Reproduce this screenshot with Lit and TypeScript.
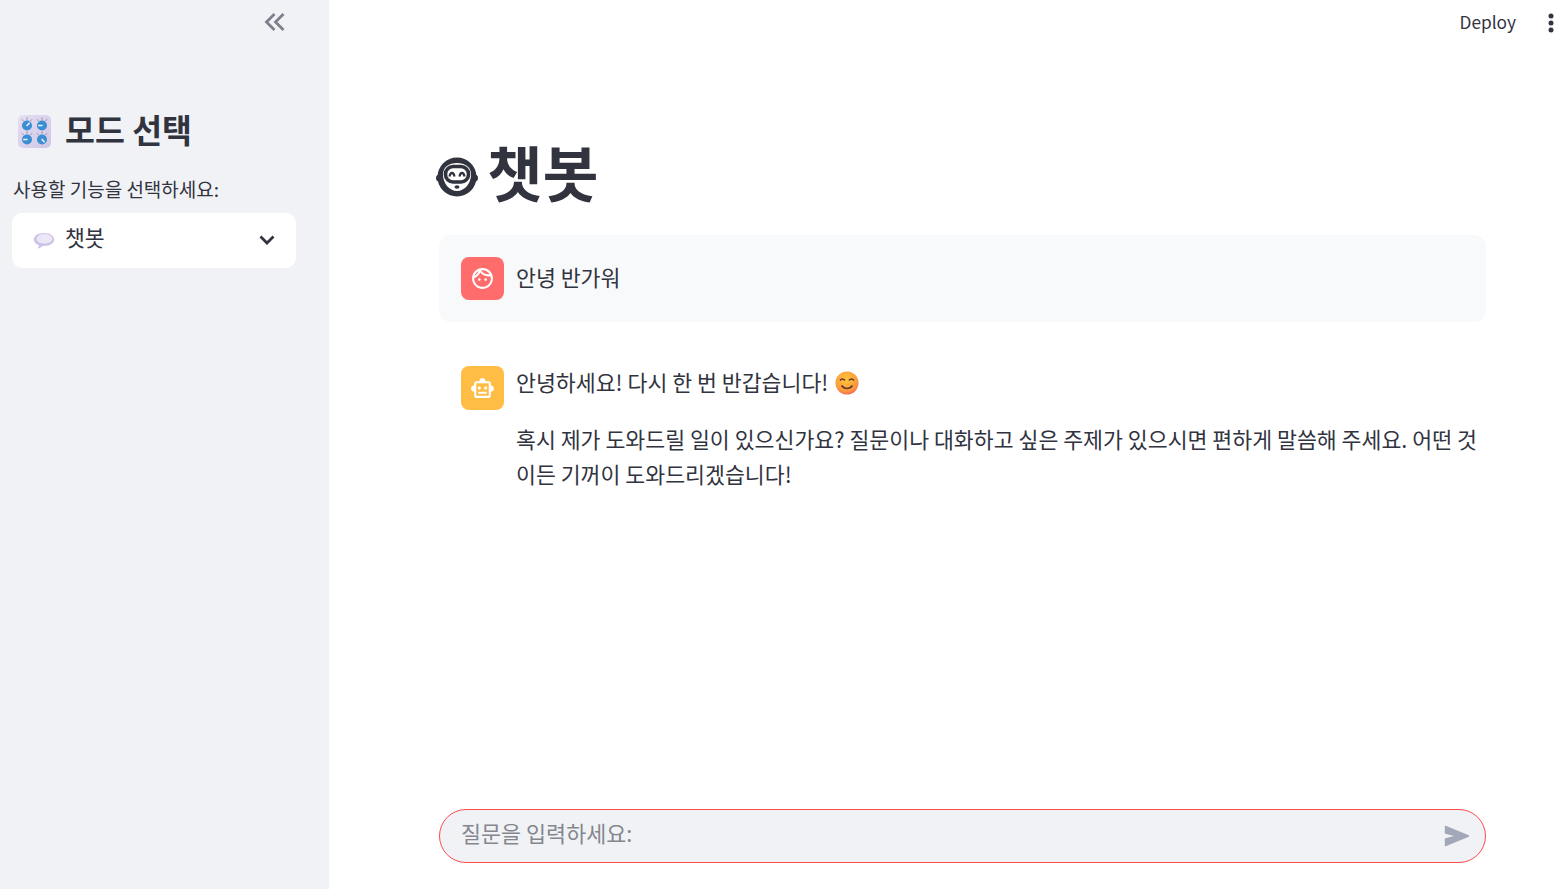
import { LitElement, css, html, svg } from "lit";
import { customElement } from "lit/decorators.js";

const knob = (x: number, y: number, a: number) => svg`
	<g transform="translate(${x} ${y})">
		<path d="M0 -5.800V-8M-3.600 -4.600L-5 -6.200M3.600 -4.600L5 -6.200" stroke="#8a8ca3" stroke-width="1" />
		<circle r="5" fill="#3a8ed3" />
		<path d="M-.5 0H3.800" stroke="#eef1f8" stroke-width="1.500" transform="rotate(${a})" />
	</g>`;

@customElement("app-root")
export class AppRoot extends LitElement {
	static styles = css`
		:host {
			display: flex;
			height: 100vh;
			overflow: hidden;
			background: #fff;
			color: #31333f;
			font-family: "Noto Sans CJK KR", "Noto Sans", sans-serif;
		}
		.sidebar {
			flex: 0 0 329px;
			box-sizing: border-box;
			padding: 12px 33px 0 12px;
			background: #f0f2f6;
		}
		.collapse {
			display: flex;
			justify-content: flex-end;
			padding-right: 10px;
			height: 22px;
		}
		.mode-title {
			display: flex;
			align-items: center;
			margin: 73px 0 0 6px;
			height: 44px;
			font-size: 32.500px;
			font-weight: 700;
			line-height: 44px;
		}
		.mode-title svg {
			margin: 4px 14px 0 0;
		}
		.field-label {
			margin: 23px 0 0 1px;
			height: 30px;
			font-size: 19px;
			line-height: 30px;
		}
		.select {
			display: flex;
			align-items: center;
			box-sizing: border-box;
			height: 55px;
			margin-top: 9px;
			padding: 0 21px;
			border-radius: 10px;
			background: #fff;
			font-size: 21.600px;
		}
		.select svg:first-child {
			margin: 0 10px 0 0;
		}
		.select svg:last-child {
			margin-top: -2px;
		}
		.select span {
			flex: 1;
			margin-top: -8px;
		}
		.main {
			flex: 1;
			display: flex;
			flex-direction: column;
			min-width: 0;
		}
		.header {
			display: flex;
			align-items: center;
			justify-content: flex-end;
			height: 46px;
			padding-right: 7px;
			font-size: 17.300px;
		}
		.deploy {
			margin: -3px 32px 0 0;
		}
		.content {
			flex: 1;
			padding: 0 75px 0 110px;
		}
		.title {
			display: flex;
			align-items: center;
			height: 72px;
			margin: 90px 0 27px -3px;
			font-size: 60.500px;
			font-weight: 700;
			line-height: 72px;
		}
		.title span {
			margin-top: -2px;
		}
		.title svg {
			margin: 10px 9px 0 0;
		}
		.message {
			display: flex;
			gap: 12px;
			padding: 22px 0 22px 22px;
			border-radius: 12px;
			font-size: 21.660px;
			line-height: 35px;
		}
		.message.user {
			margin-bottom: 22px;
			background: #f8f9fb;
		}
		.avatar {
			flex: 0 0 43px;
			display: flex;
			align-items: center;
			justify-content: center;
			height: 43px;
			border-radius: 8px;
		}
		.avatar.user {
			background: #ff6c6c;
		}
		.avatar.bot {
			height: 44px;
			background: #ffbd45;
		}
		.text {
			min-width: 0;
		}
		.text p {
			margin: 0;
		}
		.text p + p {
			margin-top: 22px;
		}
		.text svg {
			vertical-align: -4px;
			margin-left: 2px;
		}
		.user .text {
			margin-top: 2px;
		}
		.bot-text {
			margin-top: -2px;
		}
		.footer {
			padding: 0 75px 26px 110px;
		}
		.chat-input {
			display: flex;
			align-items: center;
			justify-content: space-between;
			box-sizing: border-box;
			height: 54px;
			padding: 0 15px 0 21px;
			border: 1px solid #ff4b4b;
			border-radius: 27px;
			background: #f0f2f6;
			color: #85868e;
			font-size: 21.800px;
		}
		.chat-input span {
			margin-top: -8px;
		}
	`;

	render() {
		return html`
			<aside class="sidebar">
				<div class="collapse">
					<svg width="22" height="20" viewBox="0 0 22 20" fill="none" stroke="#7d7f8b" stroke-width="2.800">
						<path d="M10.500 2L2.500 10L10.500 18M19.500 2L11.500 10L19.500 18" />
					</svg>
				</div>
				<h2 class="mode-title">
					<svg width="33" height="33" viewBox="0 0 33 33">
						<defs>
							<linearGradient id="panel" x1="0" y1="0" x2="1" y2="1">
								<stop offset="0" stop-color="#e6def3" />
								<stop offset="1" stop-color="#cfc6e6" />
							</linearGradient>
						</defs>
						<rect width="33" height="33" rx="5" fill="url(#panel)" />
						${knob(9, 10.500, -45)} ${knob(24, 10.500, 180)} ${knob(9, 24.500, 180)} ${knob(24, 24.500, 45)}
					</svg>
					모드 선택
				</h2>
				<div class="field-label">사용할 기능을 선택하세요:</div>
				<div class="select">
					<svg width="22" height="18" viewBox="0 0 22 18">
						<path d="M11 1C5 1 .8 3.800 .8 7.500c0 2.600 2.100 4.700 5.200 5.700-.2 1.300-.8 2.300-1.500 3.300 2-.3 3.700-1.200 5-2.600.5.100 1 .1 1.500.1 6 0 10.200-2.900 10.200-6.500S17 1 11 1z" fill="#cfc2ea" />
						<ellipse cx="11.500" cy="6.800" rx="8" ry="4.800" fill="#ece6f7" />
					</svg>
					<span>챗봇</span>
					<svg width="16" height="10" viewBox="0 0 16 10" fill="none" stroke="#31333f" stroke-width="2.800">
						<path d="M1.500 1.500L8 8L14.500 1.500" />
					</svg>
				</div>
			</aside>
			<main class="main">
				<header class="header">
					<span class="deploy">Deploy</span>
					<svg width="6" height="20" viewBox="0 0 6 20" fill="#31333f">
						<circle cx="3" cy="3" r="2.500" />
						<circle cx="3" cy="10" r="2.500" />
						<circle cx="3" cy="17" r="2.500" />
					</svg>
				</header>
				<section class="content">
					<h1 class="title">
						<svg width="42" height="40" viewBox="0 0 42 40">
							<circle cx="3.500" cy="21" r="3.500" fill="#31333f" />
							<circle cx="38.500" cy="21" r="3.500" fill="#31333f" />
							<circle cx="21" cy="20" r="19.500" fill="#31333f" />
							<path d="M21 6C13 6 7 10 7 17.500 7 26 13 34 21 34s14-8 14-16.500C35 10 29 6 21 6z" fill="#fff" />
							<rect x="9.500" y="9.500" width="23" height="15.500" rx="7.500" fill="#fff" stroke="#31333f" stroke-width="3.600" />
							<path d="M12.500 19.500c0-6.500 7-6.500 7 0h-2.400c0-3-2.200-3-2.200 0zM22.500 19.500c0-6.500 7-6.500 7 0h-2.400c0-3-2.200-3-2.200 0z" fill="#31333f" />
							<ellipse cx="21" cy="30" rx="2.500" ry="1.700" fill="#31333f" />
						</svg>
						<span>챗봇</span>
					</h1>
					<div class="message user">
						<div class="avatar user">
							<svg width="25" height="25" viewBox="0 0 24 24" fill="#fff">
								<path d="M10.250 13c0 .69-.56 1.250-1.250 1.250S7.750 13.690 7.750 13s.56-1.250 1.250-1.250 1.250.56 1.250 1.250zM15 11.750c-.69 0-1.250.56-1.250 1.250s.56 1.250 1.250 1.250 1.250-.56 1.250-1.250-.56-1.250-1.250-1.250zm7 .25c0 5.520-4.480 10-10 10S2 17.520 2 12 6.480 2 12 2s10 4.480 10 10zM10.660 4.120C12.060 6.440 14.600 8 17.500 8c.46 0 .91-.05 1.340-.12C17.440 5.560 14.900 4 12 4c-.46 0-.91.05-1.340.12zM4.420 9.470c1.710-.97 3.030-2.550 3.660-4.440C6.370 6 5.050 7.580 4.420 9.470zM20 12c0-.78-.12-1.530-.33-2.240-.7.15-1.420.24-2.170.24-3.130 0-5.920-1.440-7.760-3.690C8.690 8.870 6.580 10.920 4 11.860c.01.04 0 .09 0 .14 0 4.410 3.590 8 8 8s8-3.590 8-8z" />
							</svg>
						</div>
						<div class="text"><p>안녕 반가워</p></div>
					</div>
					<div class="message bot">
						<div class="avatar bot">
							<svg width="25" height="25" viewBox="0 0 24 24" fill="#fff">
								<path d="M20 9V7c0-1.100-.9-2-2-2h-3c0-1.660-1.340-3-3-3S9 3.340 9 5H6c-1.100 0-2 .9-2 2v2c-1.660 0-3 1.340-3 3s1.340 3 3 3v4c0 1.100.9 2 2 2h12c1.100 0 2-.9 2-2v-4c1.660 0 3-1.340 3-3s-1.340-3-3-3zm-2 10H6V7h12v12zm-9-6c-.83 0-1.500-.67-1.500-1.500S8.170 10 9 10s1.500.67 1.500 1.500S9.830 13 9 13zm7.500-1.500c0 .83-.67 1.500-1.500 1.500s-1.500-.67-1.500-1.500.67-1.500 1.500-1.500 1.500.67 1.500 1.500zM8 15h8v2H8v-2z" />
							</svg>
						</div>
						<div class="text bot-text">
							<p>
								안녕하세요! 다시 한 번 반갑습니다!
								<svg width="24" height="24" viewBox="0 0 24 24">
									<defs>
										<radialGradient id="smile" cx="45%" cy="35%" r="70%">
											<stop offset="0" stop-color="#ffc63a" />
											<stop offset="0.7" stop-color="#fd9a3c" />
											<stop offset="1" stop-color="#f2655f" />
										</radialGradient>
									</defs>
									<circle cx="12" cy="12" r="11.500" fill="url(#smile)" />
									<path d="M5 9.500c1.500-2 3.500-2 5 0M14 9.500c1.500-2 3.500-2 5 0M6.500 14.500c3 4 8 4 11 0" fill="none" stroke="#5d3a2b" stroke-width="1.600" />
								</svg>
							</p>
							<p>
								혹시 제가 도와드릴 일이 있으신가요? 질문이나 대화하고 싶은 주제가 있으시면 편하게 말씀해 주세요. 어떤 것이든 기꺼이 도와드리겠습니다!
							</p>
						</div>
					</div>
				</section>
				<footer class="footer">
					<div class="chat-input">
						<span>질문을 입력하세요:</span>
						<svg width="26" height="22" viewBox="0 0 26 22">
							<path d="M1.500 1.500L24.500 11L1.500 20.500V14L13 11L1.500 8z" fill="#a3a8b8" stroke="#a3a8b8" stroke-width="1.500" stroke-linejoin="round" />
						</svg>
					</div>
				</footer>
			</main>
		`;
	}
}
